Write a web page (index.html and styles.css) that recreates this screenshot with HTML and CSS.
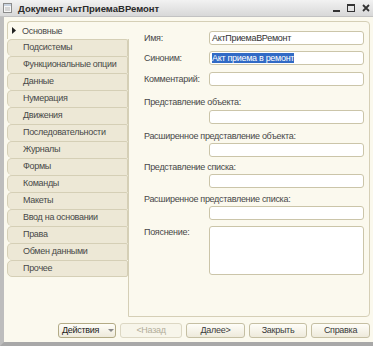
FILE: index.html
```html
<!DOCTYPE html>
<html>
  <head>
    <meta charset="utf-8">
    <title>Документ АктПриемаВРемонт</title>
    <link rel="stylesheet" href="styles.css">
  </head>
  <body>
    <div class="window">
      <div class="titlebar">
        <svg class="doc-icon" width="9" height="10" viewBox="0 0 9 10">
          <rect x="0.5" y="0.5" width="8" height="9" fill="#f6f6f6" stroke="#8c8c8c"/>
          <rect x="1" y="1" width="7" height="2" fill="#c9d3e0"/>
          <line x1="2" y1="5" x2="7" y2="5" stroke="#b5b5b5"/>
          <line x1="2" y1="7" x2="7" y2="7" stroke="#b5b5b5"/>
        </svg>
        <span class="title">Документ АктПриемаВРемонт</span>
        <div class="controls">
          <svg width="7" height="8" viewBox="0 0 7 8"><rect x="0" y="6" width="7" height="2" fill="#333"/></svg>
          <svg width="8" height="8" viewBox="0 0 8 8"><rect x="0.5" y="0.5" width="7" height="7" fill="none" stroke="#333"/><rect x="0" y="0" width="8" height="2" fill="#333"/></svg>
          <svg width="8" height="8" viewBox="0 0 8 8"><path d="M1 1 L7 7 M7 1 L1 7" stroke="#333" stroke-width="1.8"/></svg>
        </div>
      </div>
      <div class="frame">
        <div class="main">
          <div class="tabs">
            <div class="tab active">
              <svg class="arrow" width="4" height="7" viewBox="0 0 4 7"><polygon points="0,0 4,3.5 0,7" fill="#222"/></svg>
              Основные
            </div>
            <div class="tab">Подсистемы</div>
            <div class="tab">Функциональные опции</div>
            <div class="tab">Данные</div>
            <div class="tab">Нумерация</div>
            <div class="tab">Движения</div>
            <div class="tab">Последовательности</div>
            <div class="tab">Журналы</div>
            <div class="tab">Формы</div>
            <div class="tab">Команды</div>
            <div class="tab">Макеты</div>
            <div class="tab">Ввод на основании</div>
            <div class="tab">Права</div>
            <div class="tab">Обмен данными</div>
            <div class="tab last">Прочее</div>
          </div>
          <div class="page">
            <div class="row">
              <span class="label">Имя:</span>
              <div class="input">АктПриемаВРемонт</div>
            </div>
            <div class="row r2">
              <span class="label">Синоним:</span>
              <div class="input"><span class="selected">Акт приема в ремонт</span></div>
            </div>
            <div class="row r3">
              <span class="label">Комментарий:</span>
              <div class="input"></div>
            </div>
            <div class="stack s1">
              <span class="label">Представление объекта:</span>
              <div class="input"></div>
            </div>
            <div class="stack s2">
              <span class="label">Расширенное представление объекта:</span>
              <div class="input"></div>
            </div>
            <div class="stack s3">
              <span class="label">Представление списка:</span>
              <div class="input"></div>
            </div>
            <div class="stack s4">
              <span class="label">Расширенное представление списка:</span>
              <div class="input"></div>
            </div>
            <div class="row note">
              <span class="label">Пояснение:</span>
              <div class="input textarea"></div>
            </div>
          </div>
        </div>
        <div class="buttons">
          <div class="btn actions">Действия<span class="drop"></span></div>
          <div class="btn disabled back">&lt;Назад</div>
          <div class="btn next">Далее&gt;</div>
          <div class="btn close">Закрыть</div>
          <div class="btn help">Справка</div>
        </div>
      </div>
    </div>
  </body>
</html>
```

FILE: styles.css
```css
body {
  margin: 0;
  font-family: "Liberation Sans", Arial, sans-serif;
  font-size: 9px;
  letter-spacing: -0.3px;
  color: #484848;
  background-color: #fbf9ee;
}
.window {
  width: 373px;
  height: 346px;
  display: flex;
  flex-direction: column;
}
.titlebar {
  height: 16px;
  flex: none;
  display: flex;
  align-items: center;
  padding-left: 3px;
  background: linear-gradient(#f2f2f2, #d8d8d8);
  border-bottom: 1px solid #c2c2c2;
}
.doc-icon {
  display: block;
}
.title {
  margin-left: 6px;
  font-size: 9.5px;
  letter-spacing: 0;
  font-weight: bold;
  color: #2a2a2a;
}
.controls {
  margin-left: auto;
  margin-right: 3px;
  display: flex;
  align-items: center;
  gap: 7px;
}
.controls svg {
  display: block;
}
.frame {
  flex: 1;
  border-left: 4px solid #bdbdbd;
  border-bottom: 4px solid #a8a8a8;
  padding: 4px 3px 0 3px;
}
.main {
  display: flex;
  height: 296px;
}
.tabs {
  width: 121px;
  flex: none;
}
.tab {
  height: 17px;
  box-sizing: border-box;
  line-height: 15px;
  padding-left: 15px;
  background-color: #ede8d6;
  border: 1px solid #d5cfb6;
  border-bottom: none;
  border-radius: 5px 2px 0 5px;
  white-space: nowrap;
}
.tab.last {
  border-bottom: 1px solid #d5cfb6;
  border-radius: 5px 2px 2px 5px;
}
.tab.active {
  position: relative;
  z-index: 1;
  width: 122px;
  height: 18px;
  line-height: 16px;
  padding-left: 4px;
  border-right: none;
  border-radius: 4px 0 0 0;
  background-color: #fbf9ee;
  display: flex;
  align-items: center;
  gap: 6px;
}
.arrow {
  display: block;
}
.page {
  flex: 1;
  border: 1px solid #d5cfb6;
  border-radius: 0 4px 4px 0;
  padding: 9px 5px 0 15px;
}
.row {
  display: flex;
  align-items: center;
}
.row .label {
  width: 65px;
  flex: none;
  white-space: nowrap;
}
.r2 {
  margin-top: 6px;
}
.r3 {
  margin-top: 7px;
}
.stack .label {
  display: block;
  height: 12px;
  line-height: 12px;
  white-space: nowrap;
}
.stack .input {
  margin-left: 65px;
}
.s1 {
  margin-top: 10px;
}
.s1 .input {
  margin-top: 2px;
}
.s2 {
  margin-top: 6px;
}
.s3 {
  margin-top: 4px;
}
.s4 {
  margin-top: 5px;
}
.s2 .input,
.s3 .input,
.s4 .input {
  margin-top: 1px;
}
.input {
  flex: 1;
  height: 14px;
  box-sizing: border-box;
  border: 1px solid #cbc5a9;
  border-radius: 3px;
  background-color: #fff;
  padding-left: 2px;
  line-height: 12px;
  color: #333;
  white-space: nowrap;
}
.selected {
  background-color: #316ac5;
  color: #fff;
}
.note {
  margin-top: 6px;
  align-items: flex-start;
}
.note .label {
  line-height: 12px;
}
.textarea {
  height: 49px;
}
.buttons {
  margin-top: 6px;
  display: flex;
  justify-content: flex-end;
  gap: 4px;
}
.btn {
  height: 15px;
  box-sizing: border-box;
  line-height: 13px;
  text-align: center;
  border: 1px solid #c5bfa3;
  border-radius: 3px;
  background: linear-gradient(#fefdf8, #eeeadb);
  color: #3a3a3a;
}
.actions {
  width: 58px;
  display: flex;
  align-items: center;
  padding-left: 3px;
  border-color: #b3ab86;
  color: #222;
}
.drop {
  margin-left: 9px;
  border-left: 3px solid transparent;
  border-right: 3px solid transparent;
  border-top: 3px solid #8a8a8a;
}
.back {
  width: 62px;
}
.disabled {
  color: #b3ae9b;
  border-color: #dcd7c3;
  background: #f7f5ea;
}
.next {
  width: 59px;
}
.close {
  width: 58px;
}
.help {
  width: 59px;
}
```
